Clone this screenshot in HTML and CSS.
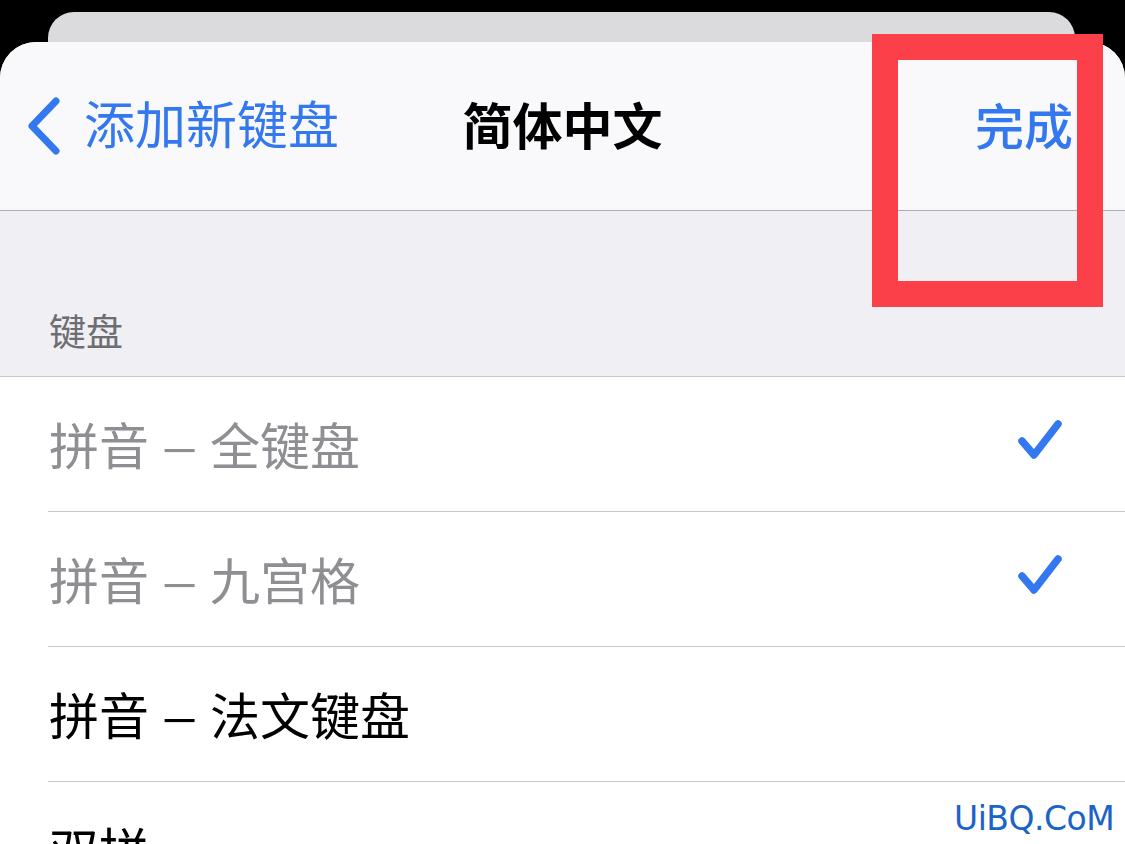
FILE: index.html
```html
<!DOCTYPE html>
<html lang="zh">
<head>
<meta charset="utf-8">
<link rel="stylesheet" href="styles.css">
</head>
<body>
<div class="screen">
  <div class="back-sheet"></div>
  <div class="sheet">
    <div class="nav">
      <div class="nav-back">
        <svg class="chevron" width="34" height="58" viewBox="0 0 34 58"><path d="M30 4 L6 29 L30 54" fill="none" stroke="#3478f0" stroke-width="7" stroke-linecap="round" stroke-linejoin="round"/></svg>
        <span>添加新键盘</span>
      </div>
      <div class="nav-title">简体中文</div>
      <div class="nav-done">完成</div>
    </div>
    <div class="group-header"><span>键盘</span></div>
    <ul class="list">
      <li class="row disabled"><span>拼音<span class="dash">–</span>全键盘</span><svg class="check" width="48" height="46" viewBox="0 0 48 46"><path d="M5 23 L17 37 L41 6" fill="none" stroke="#3478f0" stroke-width="7.5" stroke-linecap="round" stroke-linejoin="round"/></svg></li>
      <li class="row disabled"><span>拼音<span class="dash">–</span>九宫格</span><svg class="check" width="48" height="46" viewBox="0 0 48 46"><path d="M5 23 L17 37 L41 6" fill="none" stroke="#3478f0" stroke-width="7.5" stroke-linecap="round" stroke-linejoin="round"/></svg></li>
      <li class="row"><span>拼音<span class="dash">–</span>法文键盘</span></li>
      <li class="row"><span>双拼</span></li>
    </ul>
  </div>
  <div class="highlight"></div>
  <div class="watermark">UiBQ.CoM</div>
</div>
</body>
</html>
```
FILE: styles.css
```css
* { box-sizing: border-box; }
html, body {
  margin: 0;
  padding: 0;
  background: #000;
  width: 1125px;
  height: 844px;
  overflow: hidden;
  font-family: "Noto Sans CJK SC", "Noto Sans", sans-serif;
}
.screen {
  position: relative;
  width: 1125px;
  height: 844px;
  padding-top: 12px;
  display: flex;
  flex-direction: column;
}
.back-sheet {
  height: 30px;
  margin: 0 50px 0 48px;
  background: #dbdbdd;
  border-radius: 26px 26px 0 0;
}
.sheet {
  flex: 1;
  background: #fff;
  border-radius: 36px 36px 0 0;
  overflow: hidden;
  display: flex;
  flex-direction: column;
}
.nav {
  position: relative;
  height: 169px;
  background: #f9f9fb;
  border-bottom: 1px solid #aeaeb2;
  display: flex;
  align-items: center;
  justify-content: space-between;
  padding: 0 52px 0 26px;
  flex-shrink: 0;
}
.nav-back {
  display: flex;
  align-items: center;
  gap: 24px;
  color: #3478f0;
  font-size: 51px;
  line-height: 1;
  margin-top: -1px;
}
.nav-back span { margin-top: -6px; }
.nav-title {
  position: absolute;
  left: 0;
  right: 0;
  text-align: center;
  font-size: 50px;
  font-weight: 700;
  color: #000;
  line-height: 1;
  pointer-events: none;
  margin-top: -6px;
}
.nav-done {
  color: #3478f0;
  font-size: 49px;
  font-weight: 500;
  line-height: 1;
  margin-top: -6px;
}
.group-header {
  height: 166px;
  background: #efeff4;
  border-bottom: 1px solid #c8c7cc;
  display: flex;
  align-items: flex-end;
  padding: 0 0 27px 49px;
  flex-shrink: 0;
}
.group-header span {
  font-size: 37px;
  color: #6d6d72;
  line-height: 1;
}
.list {
  list-style: none;
  margin: 0;
  padding: 0 0 0 48px;
  background: #fff;
}
.row {
  height: 135px;
  border-bottom: 1px solid #c8c7cc;
  display: flex;
  align-items: center;
  justify-content: space-between;
  padding: 0 60px 0 1px;
  font-size: 50px;
  color: #000;
  line-height: 1;
}
.row > span { margin-top: -2px; }
.dash {
  display: inline-block;
  width: 61px;
  text-align: center;
  transform: scaleX(1.35);
}
.row.disabled { color: #8e8e93; }
.check { margin-top: -6px; }
.highlight {
  position: absolute;
  left: 872px;
  top: 34px;
  width: 231px;
  height: 273px;
  border: 26px solid #fc4049;
}
.watermark {
  position: absolute;
  left: 954px;
  top: 799px;
  font-family: "DejaVu Sans", sans-serif;
  font-size: 33px;
  color: #1c63c6;
  letter-spacing: -0.5px;
}
```
